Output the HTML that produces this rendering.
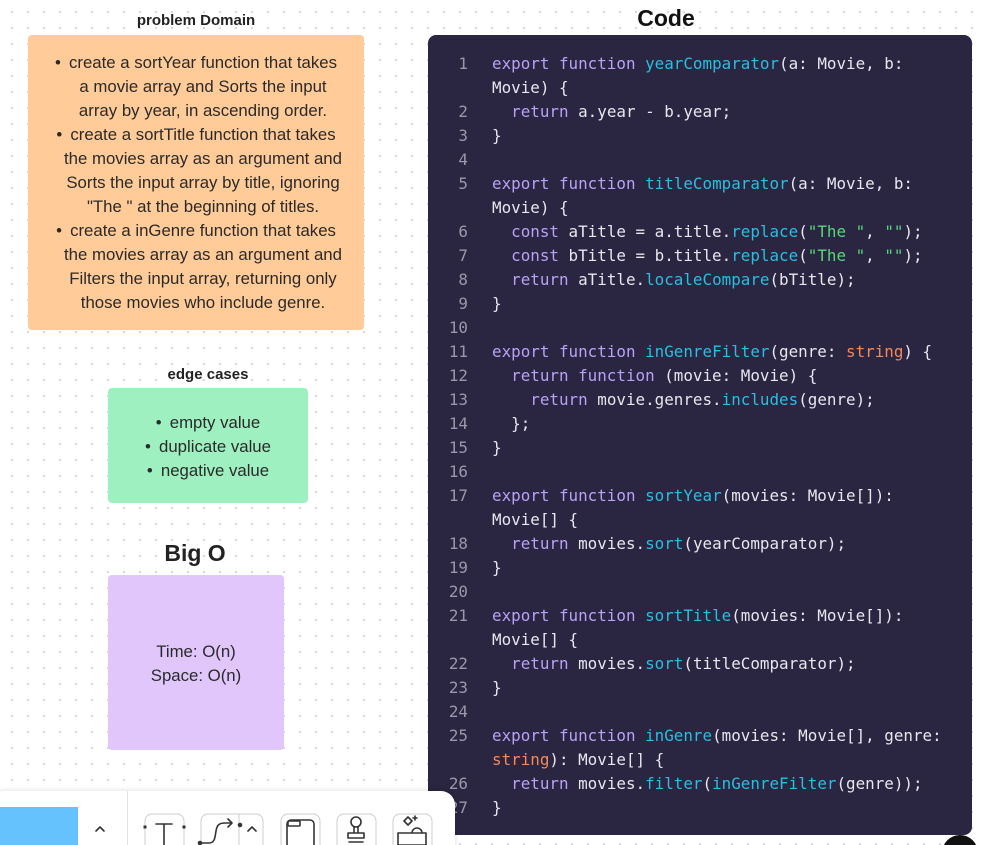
<!DOCTYPE html>
<html><head><meta charset="utf-8"><style>
*{margin:0;padding:0;box-sizing:border-box}
html,body{width:986px;height:845px;overflow:hidden}
body{position:relative;background:#fff;
background-image:radial-gradient(circle,#d6d6d6 1px,transparent 1.3px);background-size:16px 16px;background-position:4px 4px;
font-family:"Liberation Sans",sans-serif;color:#222}
.abs{position:absolute}
.box{position:absolute;border-radius:4px}
.t{position:absolute;left:0;right:0;text-align:center;font-size:16.8px;line-height:24px;color:#2a2a2a;white-space:nowrap}
.b{display:inline-block;width:14px;text-align:left}
.title{position:absolute;font-weight:bold;white-space:nowrap;text-align:center}
#code{position:absolute;left:428px;top:35px;width:544px;height:800px;background:#2a2540;border-radius:8px;font-family:"DejaVu Sans Mono","Liberation Mono",monospace;font-size:15.9px;color:#e8e6ee}
#code>div{margin-top:3px}
.ln{position:absolute;left:0;width:40px;text-align:right;color:#9b98a9}
.cl{position:absolute;left:64px;white-space:pre}
.k{color:#b9a2f6}.f{color:#29bfe0}.s{color:#58d67a}.o{color:#f08a5d}
</style></head><body>
<div class="title" style="left:96px;width:200px;top:12px;font-size:15px">problem Domain</div>
<div class="box" style="left:28px;top:35px;width:336px;height:295px;background:#ffcb98">
<div class="t" style="top:16px"><span class="b">•</span>create a sortYear function that takes</div>
<div class="t" style="top:40px;padding-left:14px">a movie array and Sorts the input</div>
<div class="t" style="top:64px;padding-left:14px">array by year, in ascending order.</div>
<div class="t" style="top:88px"><span class="b">•</span>create a sortTitle function that takes</div>
<div class="t" style="top:112px;padding-left:14px">the movies array as an argument and</div>
<div class="t" style="top:136px;padding-left:14px">Sorts the input array by title, ignoring</div>
<div class="t" style="top:160px;padding-left:14px">"The " at the beginning of titles.</div>
<div class="t" style="top:184px"><span class="b">•</span>create a inGenre function that takes</div>
<div class="t" style="top:208px;padding-left:14px">the movies array as an argument and</div>
<div class="t" style="top:232px;padding-left:14px">Filters the input array, returning only</div>
<div class="t" style="top:256px;padding-left:14px">those movies who include genre.</div>
</div>
<div class="title" style="left:108px;width:200px;top:366px;font-size:15px">edge cases</div>
<div class="box" style="left:108px;top:388px;width:200px;height:115px;background:#9ff0c0">
<div class="t" style="top:23px"><span class="b">•</span>empty value</div>
<div class="t" style="top:47px"><span class="b">•</span>duplicate value</div>
<div class="t" style="top:71px"><span class="b">•</span>negative value</div>
</div>
<div class="title" style="left:95px;width:200px;top:540px;font-size:23px">Big O</div>
<div class="box" style="left:108px;top:575px;width:176px;height:175px;background:#e0c6fb">
<div class="t" style="top:65px">Time: O(n)</div>
<div class="t" style="top:89px">Space: O(n)</div>
</div>
<div class="title" style="left:566px;width:200px;top:5px;font-size:23px;color:#111">Code</div>
<div id="code">
<div class="ln" style="top:16px">1</div><div class="cl" style="top:16px"><span class="k">export function</span> <span class="f">yearComparator</span>(a: Movie, b:</div>
<div class="cl" style="top:40px">Movie) {</div>
<div class="ln" style="top:64px">2</div><div class="cl" style="top:64px">  <span class="k">return</span> a.year - b.year;</div>
<div class="ln" style="top:88px">3</div><div class="cl" style="top:88px">}</div>
<div class="ln" style="top:112px">4</div>
<div class="ln" style="top:136px">5</div><div class="cl" style="top:136px"><span class="k">export function</span> <span class="f">titleComparator</span>(a: Movie, b:</div>
<div class="cl" style="top:160px">Movie) {</div>
<div class="ln" style="top:184px">6</div><div class="cl" style="top:184px">  <span class="k">const</span> aTitle = a.title.<span class="f">replace</span>(<span class="s">"The "</span>, <span class="s">""</span>);</div>
<div class="ln" style="top:208px">7</div><div class="cl" style="top:208px">  <span class="k">const</span> bTitle = b.title.<span class="f">replace</span>(<span class="s">"The "</span>, <span class="s">""</span>);</div>
<div class="ln" style="top:232px">8</div><div class="cl" style="top:232px">  <span class="k">return</span> aTitle.<span class="f">localeCompare</span>(bTitle);</div>
<div class="ln" style="top:256px">9</div><div class="cl" style="top:256px">}</div>
<div class="ln" style="top:280px">10</div>
<div class="ln" style="top:304px">11</div><div class="cl" style="top:304px"><span class="k">export function</span> <span class="f">inGenreFilter</span>(genre: <span class="o">string</span>) {</div>
<div class="ln" style="top:328px">12</div><div class="cl" style="top:328px">  <span class="k">return function</span> (movie: Movie) {</div>
<div class="ln" style="top:352px">13</div><div class="cl" style="top:352px">    <span class="k">return</span> movie.genres.<span class="f">includes</span>(genre);</div>
<div class="ln" style="top:376px">14</div><div class="cl" style="top:376px">  };</div>
<div class="ln" style="top:400px">15</div><div class="cl" style="top:400px">}</div>
<div class="ln" style="top:424px">16</div>
<div class="ln" style="top:448px">17</div><div class="cl" style="top:448px"><span class="k">export function</span> <span class="f">sortYear</span>(movies: Movie[]):</div>
<div class="cl" style="top:472px">Movie[] {</div>
<div class="ln" style="top:496px">18</div><div class="cl" style="top:496px">  <span class="k">return</span> movies.<span class="f">sort</span>(yearComparator);</div>
<div class="ln" style="top:520px">19</div><div class="cl" style="top:520px">}</div>
<div class="ln" style="top:544px">20</div>
<div class="ln" style="top:568px">21</div><div class="cl" style="top:568px"><span class="k">export function</span> <span class="f">sortTitle</span>(movies: Movie[]):</div>
<div class="cl" style="top:592px">Movie[] {</div>
<div class="ln" style="top:616px">22</div><div class="cl" style="top:616px">  <span class="k">return</span> movies.<span class="f">sort</span>(titleComparator);</div>
<div class="ln" style="top:640px">23</div><div class="cl" style="top:640px">}</div>
<div class="ln" style="top:664px">24</div>
<div class="ln" style="top:688px">25</div><div class="cl" style="top:688px"><span class="k">export function</span> <span class="f">inGenre</span>(movies: Movie[], genre:</div>
<div class="cl" style="top:712px"><span class="o">string</span>): Movie[] {</div>
<div class="ln" style="top:736px">26</div><div class="cl" style="top:736px">  <span class="k">return</span> movies.<span class="f">filter</span>(<span class="f">inGenreFilter</span>(genre));</div>
<div class="ln" style="top:760px">27</div><div class="cl" style="top:760px">}</div>
</div>
<div class="abs" style="left:942px;top:835px;width:36px;height:36px;border-radius:50%;background:#111"></div>
<div class="abs" style="left:-10px;top:791px;width:465px;height:80px;background:#fff;border-radius:14px;box-shadow:0 0 6px rgba(0,0,0,.15)"></div>
<div class="abs" style="left:0;top:807px;width:78px;height:40px;background:#66c2fd"></div>
<div class="abs" style="left:127px;top:791px;width:1px;height:54px;background:#e3e3e3"></div>
<svg class="abs" style="left:0;top:791px" width="455" height="54" viewBox="0 0 455 54" fill="none" stroke="#333" stroke-width="1.6" stroke-linecap="round" stroke-linejoin="round">
<path d="M96 40l4-4 4 4"/>
<rect x="145" y="23" width="39" height="40" rx="7" stroke="#ccc" stroke-width="1"/>
<path d="M156 33h16M164 33v21"/>
<rect x="143.5" y="34.5" width="3" height="3" fill="#333" stroke="none"/><rect x="182.5" y="34.5" width="3" height="3" fill="#333" stroke="none"/>
<rect x="201" y="23" width="62" height="40" rx="7" stroke="#ccc" stroke-width="1"/>
<path d="M239 23v31" stroke="#ccc" stroke-width="1"/>
<path d="M201 52h8c6 0 6-6 7-12s3-8 9-8h7M228 28l4 4-4 4"/>
<circle cx="200" cy="52" r="1.5" fill="#333"/><circle cx="240" cy="34" r="1.5" fill="#333"/>
<path d="M248 40l4-4 4 4"/>
<rect x="281" y="23" width="39" height="40" rx="7" stroke="#ccc" stroke-width="1"/>
<rect x="287" y="29" width="27" height="28" rx="4"/><rect x="288" y="30" width="12" height="5" rx="1"/>
<rect x="337" y="23" width="39" height="40" rx="7" stroke="#ccc" stroke-width="1"/>
<circle cx="356" cy="31" r="5"/><path d="M354 36v6M358 36v6M348 42h16v5h-16zM349 51h14"/>
<rect x="393" y="23" width="39" height="40" rx="7" stroke="#ccc" stroke-width="1"/>
<path d="M404 30l4-4 4 4-4 4zM415 25v4M413 27h4M398 42h28v12h-28zM412 42a5 5 0 0 1 10 0"/>
</svg>
</body></html>
